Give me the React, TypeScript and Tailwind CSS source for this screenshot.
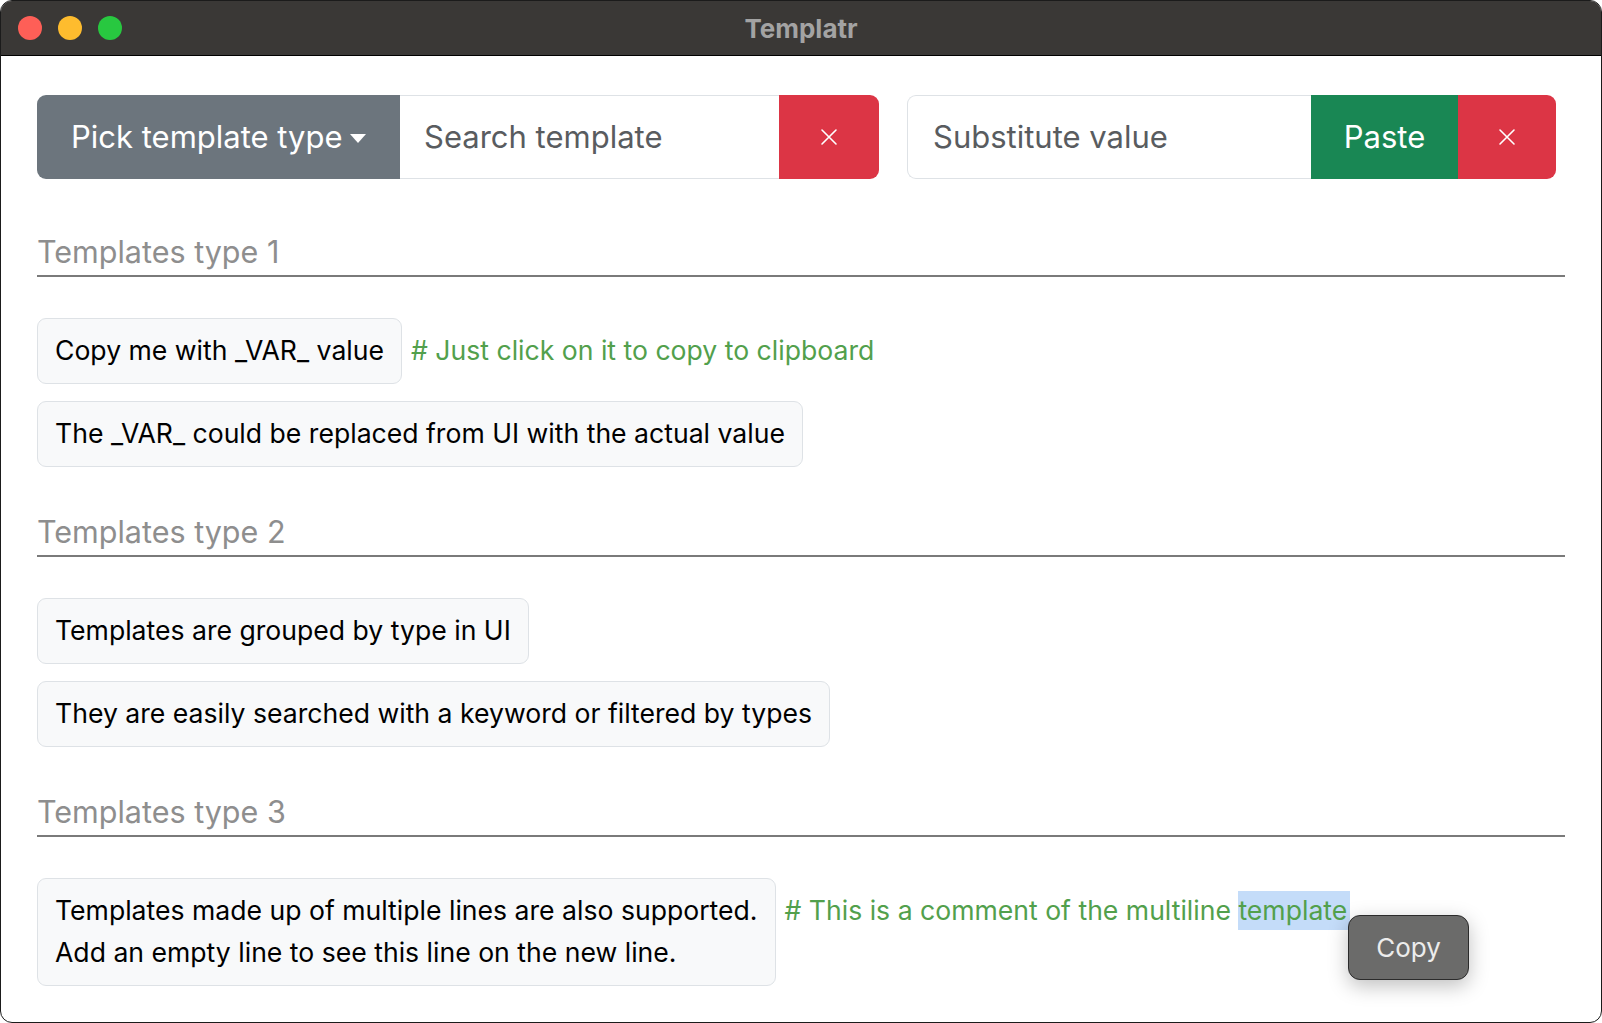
import React from 'react';

const font = { fontFamily: 'Inter, "Noto Sans", sans-serif' };

const XIcon = () => (
  <svg width="20" height="20" viewBox="0 0 20 20" fill="none" stroke="white" strokeWidth="1.6" strokeLinecap="round">
    <path d="M3 3 L17 17 M17 3 L3 17" />
  </svg>
);

const TemplateBox = ({ lines }: { lines: string[] }) => (
  <div className="rounded-[9px] border border-[#dee2e6] bg-[#f8f9fa] px-[17px] pt-[10px] pb-[12px] text-[26.6px] leading-[42px] text-black whitespace-nowrap">
    {lines.map((l, i) => (
      <div key={i}>{l}</div>
    ))}
  </div>
);

const Row = ({ lines, comment }: { lines: string[]; comment?: React.ReactNode }) => (
  <div className="flex items-start">
    <TemplateBox lines={lines} />
    {comment && (
      <div className="ml-[9px] pt-[11px] text-[26.6px] leading-[42px] text-[#52a04c] whitespace-nowrap">{comment}</div>
    )}
  </div>
);

const Section = ({ title, children, className }: { title: string; children: React.ReactNode; className?: string }) => (
  <div className={className}>
    <div className="border-b-2 border-[#7a7a7a] pb-[6px] text-[30.5px] leading-[34px] text-[#8e8e8e]">{title}</div>
    <div className="mt-[41px] flex flex-col gap-[17px]">{children}</div>
  </div>
);

export default function App() {
  return (
    <div className="w-[1602px] h-[1023px] bg-white" style={font}>
      <div className="relative flex h-full w-full flex-col overflow-hidden rounded-[12px] border border-[#1b1b1b] bg-white">
        {/* title bar */}
        <div className="relative flex h-[55px] shrink-0 items-center border-b border-black bg-[#3a3836]">
          <div className="ml-[17px] flex gap-[16px]">
            <span className="h-[24px] w-[24px] rounded-full bg-[#fe5f57]" />
            <span className="h-[24px] w-[24px] rounded-full bg-[#febc2e]" />
            <span className="h-[24px] w-[24px] rounded-full bg-[#28c840]" />
          </div>
          <div className="absolute left-0 right-0 text-center text-[26px] font-bold text-[#a3a3a3]">Templatr</div>
        </div>

        <div className="flex-1 pl-[36px] pr-[36px] pt-[39px]">
          {/* toolbar */}
          <div className="flex gap-[28px]">
            <div className="flex h-[84px] w-[842px]">
              <button className="flex w-[363px] items-center rounded-l-[9px] bg-[#6c757d] pl-[34px] text-[31px] text-white">
                Pick template type
                <span className="ml-[7px] mt-[2px] h-0 w-0 border-x-[8px] border-t-[9px] border-x-transparent border-t-white" />
              </button>
              <div className="flex w-[379px] items-center border-y border-[#dee2e6] pl-[24px] text-[31px] text-[#595c5f]">
                Search template
              </div>
              <button className="flex w-[100px] items-center justify-center rounded-r-[9px] bg-[#dc3545]">
                <XIcon />
              </button>
            </div>
            <div className="flex h-[84px] w-[649px]">
              <div className="flex w-[404px] items-center rounded-l-[9px] border border-r-0 border-[#dee2e6] pl-[25px] text-[31px] text-[#595c5f]">
                Substitute value
              </div>
              <button className="flex w-[147px] items-center justify-center bg-[#198754] text-[31px] text-white">Paste</button>
              <button className="flex w-[98px] items-center justify-center rounded-r-[9px] bg-[#dc3545]">
                <XIcon />
              </button>
            </div>
          </div>

          <Section title="Templates type 1" className="mt-[56px]">
            <Row lines={['Copy me with _VAR_ value']} comment="# Just click on it to copy to clipboard" />
            <Row lines={['The _VAR_ could be replaced from UI with the actual value']} />
          </Section>

          <Section title="Templates type 2" className="mt-[48px]">
            <Row lines={['Templates are grouped by type in UI']} />
            <Row lines={['They are easily searched with a keyword or filtered by types']} />
          </Section>

          <Section title="Templates type 3" className="mt-[48px]">
            <Row
              lines={['Templates made up of multiple lines are also supported.', 'Add an empty line to see this line on the new line.']}
              comment={
                <>
                  # This is a comment of the multiline{' '}
                  <span className="inline-block bg-[#c4dcf9] pr-[3px] leading-[39px]">template</span>
                </>
              }
            />
          </Section>
        </div>

        {/* context popup */}
        <div className="absolute left-[1347px] top-[914px] flex h-[65px] w-[121px] items-center justify-center rounded-[12px] border border-[#2b2b2b] bg-[#6b6b6a] text-[26px] text-[#ececec] shadow-[0_6px_20px_rgba(0,0,0,0.25)]">
          Copy
        </div>
      </div>
    </div>
  );
}
